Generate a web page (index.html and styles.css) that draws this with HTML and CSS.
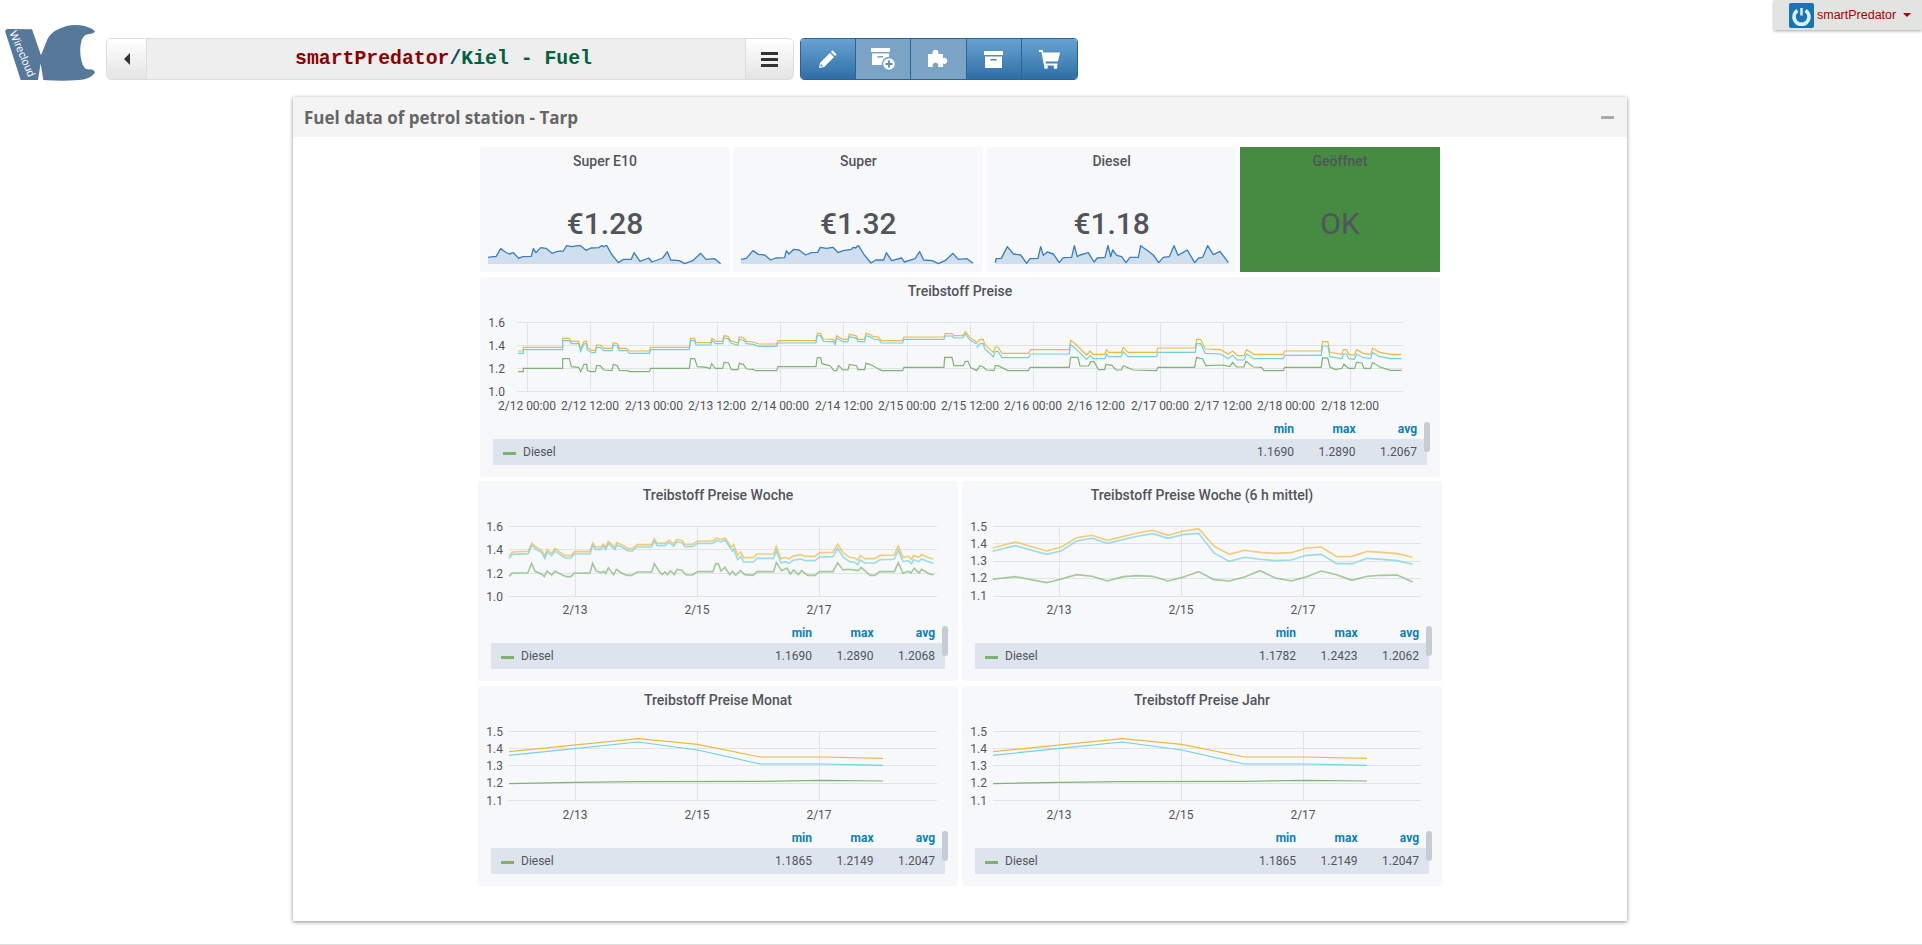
FILE: index.html
```html
<!DOCTYPE html>
<html>
  <head>
    <meta charset="utf-8">
    <meta name="viewport" content="width=device-width, initial-scale=1">
    <title>smartPredator/Kiel - Fuel</title>
    <link rel="stylesheet" href="styles.css">
  </head>
  <body>
    <header class="topbar">
      <svg class="logo" viewBox="0 0 315 195">
        <path fill="#55789b" d="M16 36Q14 28 24 27L96 28L123 106L142 58Q152 38 175 28Q205 12 240 16Q270 20 285 34Q280 42 268 42Q252 42 245 60Q236 90 245 125Q252 150 268 148Q282 148 285 158Q270 178 235 180Q190 184 130 180L122 130L114 180L62 180Z"/>
        <text class="logo-text" transform="translate(28 38) rotate(67)">Wirecloud</text>
      </svg>
      <div class="path-bar">
        <button class="path-btn back"><span class="caret-left"></span></button>
        <div class="path-title"><span class="owner">smartPredator</span><span class="slash">/</span><span class="name">Kiel - Fuel</span></div>
        <button class="path-btn menu"><span></span><span></span><span></span></button>
      </div>
      <div class="tools">
        <button class="tool">
          <svg width="18" height="18" viewBox="0 0 18 18"><path fill="#fff" d="M13.6 0.3L17.7 4.4L16 6.1L11.9 2ZM10.9 3L15 7.1L5.2 16.9L0 18L1.1 12.8ZM2 13.5L1.4 16.6L4.5 16L2.8 15.2Z"/></svg>
        </button>
        <button class="tool off">
          <svg width="26" height="24" viewBox="0 0 26 24">
            <path fill="#fff" fill-rule="evenodd" d="M1 1H20V5H1ZM2 6.500H19V18H2ZM7.500 9V10.500H13V9Z"/>
            <circle cx="19" cy="17" r="6.500" fill="#fff" stroke="#7ba3c5" stroke-width="1.500"/>
            <path fill="none" stroke="#5f8fb8" stroke-width="2" d="M15.500 17H22.500M19 13.500V20.500"/>
          </svg>
        </button>
        <button class="tool off">
          <svg width="21" height="21" viewBox="0 0 21 21"><path fill="#fff" d="M0 5h4.800a3 3 0 1 1 5.400 0H15v4.200a3 3 0 1 1 0 5.400V18H10.200a3 3 0 1 0-5.400 0H0z"/></svg>
        </button>
        <button class="tool">
          <svg width="19" height="17" viewBox="0 0 19 17"><path fill="#fff" fill-rule="evenodd" d="M0 0H19V4H0ZM1 5.500H18V17H1ZM6.500 8V9.500H12.500V8Z"/></svg>
        </button>
        <button class="tool">
          <svg width="21" height="19" viewBox="0 0 21 19"><path fill="#fff" d="M0 0H3.600L4.400 2.500H21L19 11.500H6.400L6.800 13.500H18.500V15.500H5L2.400 2H0Z"/><circle cx="7" cy="17" r="1.900" fill="#fff"/><circle cx="16.500" cy="17" r="1.900" fill="#fff"/></svg>
        </button>
      </div>
      <div class="user">
        <svg width="25" height="25" viewBox="0 0 25 25">
          <rect width="25" height="25" rx="2" fill="#1276b5"/>
          <path fill="none" stroke="#e2edf3" stroke-width="3.500" d="M8.500 7.500A7.500 7.500 0 1 0 16.500 7.500"/>
          <path fill="none" stroke="#e2edf3" stroke-width="2.500" d="M12.500 5V12.500"/>
        </svg>
        <span class="user-name">smartPredator</span>
        <span class="caret-down"></span>
      </div>
    </header>

    <section class="panel">
      <div class="panel-head">
        <h2>Fuel data of petrol station - Tarp</h2>
        <span class="minimize"></span>
      </div>
      <div class="dash">
        <div class="stats">
          <div class="stat">
            <div class="card-title">Super E10</div>
            <div class="stat-value">€1.28</div>
            <svg class="spark" viewBox="0 0 750 81">
              <g transform="translate(-30 -315)">
                <path class="spark-fill" d="M54 352L70 350L78 350L92 326L106 336L118 342L130 338L146 355L158 350L184 349L190 326L198 338L212 323L228 325L246 340L262 334L280 333L290 317L306 320L330 316L348 331L362 324L386 323L394 317L400 320L410 316L424 342L445 368L460 358L484 358L492 338L510 364L536 354L546 366L578 354L592 335L602 360L628 362L644 371L668 362L692 340L708 358L734 356L752 371V372H54Z"/>
                <path class="spark-line" d="M54 352L70 350L78 350L92 326L106 336L118 342L130 338L146 355L158 350L184 349L190 326L198 338L212 323L228 325L246 340L262 334L280 333L290 317L306 320L330 316L348 331L362 324L386 323L394 317L400 320L410 316L424 342L445 368L460 358L484 358L492 338L510 364L536 354L546 366L578 354L592 335L602 360L628 362L644 371L668 362L692 340L708 358L734 356L752 371"/>
              </g>
            </svg>
          </div>
          <div class="stat">
            <div class="card-title">Super</div>
            <div class="stat-value">€1.32</div>
            <svg class="spark" viewBox="0 0 750 81">
              <g transform="translate(-790 -315)">
                <path class="spark-fill" d="M814 358L830 355L850 332L866 343L885 345L903 360L918 354L945 353L950 332L958 342L972 328L988 330L1008 345L1025 338L1044 337L1052 322L1070 325L1090 322L1106 338L1120 332L1145 328L1150 322L1158 324L1166 316L1184 345L1204 369L1218 360L1242 360L1250 338L1266 362L1296 354L1304 366L1336 356L1350 335L1362 360L1388 362L1406 371L1426 362L1450 340L1466 358L1492 356L1510 370V372H814Z"/>
                <path class="spark-line" d="M814 358L830 355L850 332L866 343L885 345L903 360L918 354L945 353L950 332L958 342L972 328L988 330L1008 345L1025 338L1044 337L1052 322L1070 325L1090 322L1106 338L1120 332L1145 328L1150 322L1158 324L1166 316L1184 345L1204 369L1218 360L1242 360L1250 338L1266 362L1296 354L1304 366L1336 356L1350 335L1362 360L1388 362L1406 371L1426 362L1450 340L1466 358L1492 356L1510 370"/>
              </g>
            </svg>
          </div>
          <div class="stat">
            <div class="card-title">Diesel</div>
            <div class="stat-value">€1.18</div>
            <svg class="spark" viewBox="0 0 750 81">
              <g transform="translate(-51 -315)">
                <path class="spark-fill" d="M76 368L78 356L94 355L112 320L130 342L152 345L170 370L180 356L204 355L212 320L220 346L232 336L250 342L268 368L280 353L305 352L313 317L322 350L330 345L355 338L372 366L382 354L405 352L414 316L422 350L428 330L440 346L455 350L468 368L480 352L505 352L512 317L530 330L550 345L566 368L580 352L598 350L612 317L624 346L652 330L674 368L686 354L698 352L713 317L730 344L750 334L775 368V372H76Z"/>
                <path class="spark-line" d="M76 368L78 356L94 355L112 320L130 342L152 345L170 370L180 356L204 355L212 320L220 346L232 336L250 342L268 368L280 353L305 352L313 317L322 350L330 345L355 338L372 366L382 354L405 352L414 316L422 350L428 330L440 346L455 350L468 368L480 352L505 352L512 317L530 330L550 345L566 368L580 352L598 350L612 317L624 346L652 330L674 368L686 354L698 352L713 317L730 344L750 334L775 368"/>
              </g>
            </svg>
          </div>
          <div class="stat stat-ok">
            <div class="card-title">Geöffnet</div>
            <div class="stat-value ok">OK</div>
          </div>
        </div>

        <div class="card card-wide">
          <div class="card-title">Treibstoff Preise</div>
          <svg class="chart" width="960" height="115" viewBox="0 0 960 115">
            <g class="grid">
              <path d="M37 17.500H923M37 40.500H923M37 63.500H923M37 86.500H923"/>
              <path d="M47.500 17V87M110.500 17V87M173.500 17V87M237.500 17V87M300.500 17V87M363.500 17V87M427.500 17V87M490.500 17V87M553.500 17V87M616.500 17V87M680.500 17V87M743.500 17V87M806.500 17V87M870.500 17V87"/>
            </g>
            <g class="y-labels">
              <text x="25" y="22">1.6</text><text x="25" y="45">1.4</text><text x="25" y="68">1.2</text><text x="25" y="91">1.0</text>
            </g>
            <g class="x-labels">
              <text x="47" y="105">2/12 00:00</text><text x="110" y="105">2/12 12:00</text><text x="174" y="105">2/13 00:00</text><text x="237" y="105">2/13 12:00</text><text x="300" y="105">2/14 00:00</text><text x="364" y="105">2/14 12:00</text><text x="427" y="105">2/15 00:00</text><text x="490" y="105">2/15 12:00</text><text x="553" y="105">2/16 00:00</text><text x="616" y="105">2/16 12:00</text><text x="680" y="105">2/17 00:00</text><text x="743" y="105">2/17 12:00</text><text x="806" y="105">2/18 00:00</text><text x="870" y="105">2/18 12:00</text>
            </g>
            <g class="lines" transform="scale(.3333) translate(0 -90)">
              <defs>
                <path id="wide-a" d="M114 228L130 228L130 217L248 217L248 190L268 190L274 199L296 199L302 222L312 199L320 199L322 218L336 226L346 226L350 210L360 210L372 220L396 220L400 203L412 206L418 220L440 220L448 228L508 228L512 217L628 217L632 190L644 190L648 203L692 203L696 190L708 199L728 199L732 182L744 184L752 197L774 204L778 186L790 188L800 199L820 201L836 207L890 207L894 197L1008 197L1012 175L1022 175L1030 192L1060 193L1066 202L1070 182L1080 188L1088 193L1104 193L1108 178L1130 183L1134 193L1154 193L1158 175L1170 178L1180 185L1196 186L1204 197L1268 197L1272 186L1392 186L1396 176L1416 176L1422 182L1448 182L1456 170L1470 188L1490 200"/>
                <path id="wide-b" d="M1490 205L1500 193L1510 193L1514 208L1540 232L1546 216L1554 216L1566 235L1646 235L1652 224L1768 224L1772 196L1784 205L1820 240L1830 228L1840 238L1874 238L1880 224L1886 232L1924 232L1930 217L1944 232L2030 232L2034 219L2146 219L2150 193L2162 193L2176 222L2222 224L2245 238L2258 228L2272 242L2292 242L2300 224L2322 238L2410 238L2414 228L2524 228L2528 200L2544 200L2550 232L2586 238L2590 224L2600 224L2606 238L2624 240L2630 224L2650 235L2672 238L2678 220L2700 232L2732 238L2765 238"/>
              </defs>
              <use href="#wide-a" class="yellow"/>
              <use href="#wide-b" class="yellow"/>
              <use href="#wide-a" class="cyan" transform="translate(0 7)"/>
              <use href="#wide-b" class="cyan" transform="translate(0 13)"/>
              <path class="green" d="M114 290L130 290L130 280L248 280L248 251L268 251L274 275L296 277L302 290L312 268L320 268L322 287L332 290L346 290L350 272L360 272L372 285L396 287L400 268L412 272L418 286L444 287L448 290L508 290L512 280L628 280L632 251L644 251L652 275L680 277L690 281L695 266L706 280L728 280L732 262L746 264L754 284L774 284L778 265L790 268L800 282L820 283L826 287L890 287L894 275L1008 275L1012 248L1022 248L1026 266L1050 272L1062 287L1070 287L1076 272L1088 284L1104 285L1108 268L1130 272L1134 284L1154 284L1158 265L1170 268L1200 284L1206 287L1268 287L1272 277L1392 277L1394 247L1416 247L1422 272L1450 272L1456 259L1464 259L1472 278L1490 287L1500 272L1510 276L1520 285L1542 287L1546 272L1554 272L1584 287L1646 287L1650 277L1768 277L1772 247L1794 247L1800 273L1826 273L1832 260L1842 260L1856 284L1874 284L1878 268L1896 271L1908 285L1924 285L1930 272L1960 285L2030 287L2034 277L2144 277L2150 247L2168 252L2178 272L2230 270L2250 275L2258 262L2270 276L2292 276L2298 259L2320 276L2345 277L2352 287L2410 287L2414 277L2524 277L2528 248L2544 250L2550 276L2566 284L2586 280L2592 268L2606 280L2624 280L2630 262L2646 264L2652 280L2672 280L2678 262L2700 276L2732 286L2765 286"/>
            </g>
          </svg>
          <div class="legend">
            <div class="legend-head"><span>min</span><span>max</span><span>avg</span></div>
            <div class="legend-row">
              <i class="swatch"></i><span class="series">Diesel</span><span>1.1690</span><span>1.2890</span><span>1.2067</span>
            </div>
            <div class="scroll-thumb"></div>
          </div>
        </div>

        <div class="card-row">
          <div class="card">
            <div class="card-title">Treibstoff Preise Woche</div>
            <svg class="chart" width="480" height="115" viewBox="0 0 480 115">
              <g class="grid">
                <path d="M31 17.500H459M31 40.500H459M31 64.500H459M31 87.500H459"/>
                <path d="M97.500 17V88M219.500 17V88M341.500 17V88"/>
              </g>
              <g class="y-labels">
                <text x="25" y="22">1.6</text><text x="25" y="45">1.4</text><text x="25" y="69">1.2</text><text x="25" y="92">1.0</text>
              </g>
              <g class="x-labels">
                <text x="97" y="105">2/13</text><text x="219" y="105">2/15</text><text x="341" y="105">2/17</text>
              </g>
              <g class="lines thick" transform="scale(.3333) translate(-9 -93)">
                <defs>
                  <path id="week-a" d="M102 235L112 222L160 220L170 195L185 208L200 217L210 235L216 215L230 226L240 212L260 226L270 233L288 233L298 221L345 221L353 195L362 207L378 207L385 198L392 208L400 190L420 208L425 194L440 200L460 212L472 212L486 200L530 200L538 182L546 196L560 195L570 196L582 186L596 198L606 184L622 188L630 199L652 199L668 189L714 189L726 180L738 185L750 180L770 208"/>
                  <path id="week-b" d="M770 208L776 200L788 232L798 222L806 239L836 239L846 228L896 228L904 205L918 242L932 238L942 243L954 234L978 230L990 235L1020 235L1034 224L1074 223L1088 198L1104 224L1124 238L1140 240L1148 247L1156 233L1170 242L1200 242L1216 232L1258 231L1270 204L1284 238L1300 235L1310 244L1316 232L1332 238L1340 230L1364 240L1376 243"/>
                </defs>
                <use href="#week-a" class="yellow"/>
                <use href="#week-b" class="yellow"/>
                <use href="#week-a" class="cyan" transform="translate(0 7)"/>
                <use href="#week-b" class="cyan" transform="translate(0 13)"/>
                <path class="green" d="M102 295L112 285L158 285L170 256L180 280L200 288L208 296L216 279L230 291L240 279L262 291L275 296L288 296L298 285L345 285L353 256L364 279L378 284L386 280L392 286L400 270L416 290L424 274L440 285L456 292L470 292L486 282L530 282L538 257L552 280L562 290L570 282L578 290L586 278L598 290L606 274L620 277L634 291L652 291L668 281L714 281L722 257L730 257L738 279L750 268L764 290L772 280L782 292L796 278L810 290L834 292L846 281L896 281L904 253L920 278L936 270L946 288L956 276L970 290L980 278L998 292L1020 292L1034 281L1074 281L1088 254L1104 276L1120 274L1150 278L1158 268L1186 292L1200 292L1214 281L1258 281L1270 254L1284 286L1300 280L1308 285L1318 271L1332 285L1340 274L1364 288L1376 291"/>
              </g>
            </svg>
            <div class="legend">
              <div class="legend-head"><span>min</span><span>max</span><span>avg</span></div>
              <div class="legend-row">
                <i class="swatch"></i><span class="series">Diesel</span><span>1.1690</span><span>1.2890</span><span>1.2068</span>
              </div>
              <div class="scroll-thumb"></div>
            </div>
          </div>

          <div class="card">
            <div class="card-title">Treibstoff Preise Woche (6 h mittel)</div>
            <svg class="chart" width="480" height="115" viewBox="0 0 480 115">
              <g class="grid">
                <path d="M31 17.500H459M31 34.500H459M31 52.500H459M31 69.500H459M31 87.500H459"/>
                <path d="M97.500 17V88M219.500 17V88M341.500 17V88"/>
              </g>
              <g class="y-labels">
                <text x="25" y="22">1.5</text><text x="25" y="39">1.4</text><text x="25" y="56">1.3</text><text x="25" y="73">1.2</text><text x="25" y="91">1.1</text>
              </g>
              <g class="x-labels">
                <text x="97" y="105">2/13</text><text x="219" y="105">2/15</text><text x="341" y="105">2/17</text>
              </g>
              <g class="lines thick" transform="scale(.3333) translate(-6 -93)">
                <path class="yellow" d="M98 210L166 192L260 219L304 207L350 179L396 172L442 187L532 165L578 157L624 172L668 160L716 152L762 204L808 229L854 217L900 223L946 226L994 224L1040 210L1084 207L1130 236L1176 235L1222 220L1266 223L1312 227L1358 238"/>
                <path class="cyan" d="M98 220L166 203L260 229L304 218L350 189L396 181L442 196L532 175L578 167L624 181L668 170L716 166L762 225L808 250L854 238L900 244L946 248L994 246L1040 232L1084 229L1130 257L1176 257L1222 241L1266 244L1312 248L1358 259"/>
                <path class="green" d="M98 304L166 296L260 314L304 303L350 290L396 295L442 309L490 296L532 293L578 295L624 309L668 298L716 281L762 305L808 309L854 297L900 278L946 300L994 309L1040 296L1084 279L1130 290L1176 307L1222 295L1266 292L1312 291L1358 312"/>
              </g>
            </svg>
            <div class="legend">
              <div class="legend-head"><span>min</span><span>max</span><span>avg</span></div>
              <div class="legend-row">
                <i class="swatch"></i><span class="series">Diesel</span><span>1.1782</span><span>1.2423</span><span>1.2062</span>
              </div>
              <div class="scroll-thumb"></div>
            </div>
          </div>
        </div>

        <div class="card-row">
          <div class="card">
            <div class="card-title">Treibstoff Preise Monat</div>
            <svg class="chart" width="480" height="115" viewBox="0 0 480 115">
              <g class="grid">
                <path d="M31 17.500H459M31 34.500H459M31 51.500H459M31 69.500H459M31 86.500H459"/>
                <path d="M97.500 17V87M219.500 17V87M341.500 17V87"/>
              </g>
              <g class="y-labels">
                <text x="25" y="22">1.5</text><text x="25" y="39">1.4</text><text x="25" y="56">1.3</text><text x="25" y="73">1.2</text><text x="25" y="91">1.1</text>
              </g>
              <g class="x-labels">
                <text x="97" y="105">2/13</text><text x="219" y="105">2/15</text><text x="341" y="105">2/17</text>
              </g>
              <g class="lines" transform="scale(.3333) translate(-9 -96)">
                <path class="yellow" d="M102 209L490 170L668 187L856 225L1040 225L1224 229"/>
                <path class="cyan" d="M102 220L490 180L668 204L856 246L1040 246L1224 250"/>
                <path class="green" d="M102 305L300 301L490 299L856 298L1040 295L1224 297"/>
              </g>
            </svg>
            <div class="legend">
              <div class="legend-head"><span>min</span><span>max</span><span>avg</span></div>
              <div class="legend-row">
                <i class="swatch"></i><span class="series">Diesel</span><span>1.1865</span><span>1.2149</span><span>1.2047</span>
              </div>
              <div class="scroll-thumb"></div>
            </div>
          </div>

          <div class="card">
            <div class="card-title">Treibstoff Preise Jahr</div>
            <svg class="chart" width="480" height="115" viewBox="0 0 480 115">
              <g class="grid">
                <path d="M31 17.500H459M31 34.500H459M31 51.500H459M31 69.500H459M31 86.500H459"/>
                <path d="M97.500 17V87M219.500 17V87M341.500 17V87"/>
              </g>
              <g class="y-labels">
                <text x="25" y="22">1.5</text><text x="25" y="39">1.4</text><text x="25" y="56">1.3</text><text x="25" y="73">1.2</text><text x="25" y="91">1.1</text>
              </g>
              <g class="x-labels">
                <text x="97" y="105">2/13</text><text x="219" y="105">2/15</text><text x="341" y="105">2/17</text>
              </g>
              <g class="lines" transform="scale(.3333) translate(-9 -96)">
                <path class="yellow" d="M102 209L490 170L668 187L856 225L1040 225L1224 229"/>
                <path class="cyan" d="M102 220L490 180L668 204L856 246L1040 246L1224 250"/>
                <path class="green" d="M102 305L300 301L490 299L856 298L1040 295L1224 297"/>
              </g>
            </svg>
            <div class="legend">
              <div class="legend-head"><span>min</span><span>max</span><span>avg</span></div>
              <div class="legend-row">
                <i class="swatch"></i><span class="series">Diesel</span><span>1.1865</span><span>1.2149</span><span>1.2047</span>
              </div>
              <div class="scroll-thumb"></div>
            </div>
          </div>
        </div>
      </div>
    </section>
    <div class="page-foot"></div>
  </body>
</html>
```

FILE: styles.css
```css
* {
  box-sizing: border-box;
}

html,
body {
  height: 945px;
  overflow: hidden;
}

body {
  margin: 0;
  background: #fff;
  font-family: Roboto, sans-serif;
  color: #52545c;
  position: relative;
}

button {
  border: 0;
  padding: 0;
  margin: 0;
}

/* top bar */

.topbar {
  display: flex;
  align-items: flex-start;
  height: 97px;
}

.logo {
  width: 105px;
  height: 65px;
  margin-top: 20px;
  flex: none;
}

.logo-text {
  fill: #fff;
  font: 33px "Liberation Sans", sans-serif;
}

.path-bar {
  display: flex;
  width: 688px;
  height: 42px;
  margin-top: 38px;
  margin-left: 1px;
  background: #eee;
  border: 1px solid #ddd;
  border-radius: 5px;
  overflow: hidden;
}

.path-btn {
  width: 40px;
  flex: none;
  background: linear-gradient(#fff, #e4e4e4);
  display: flex;
  flex-direction: column;
  align-items: center;
  justify-content: center;
}

.path-btn.back {
  border-right: 1px solid #ddd;
}

.path-btn.menu {
  width: 48px;
  gap: 3px;
  border-left: 1px solid #ddd;
}

.path-btn.menu span {
  display: block;
  width: 17px;
  height: 3px;
  background: #333;
}

.caret-left {
  width: 0;
  height: 0;
  border-top: 6px solid transparent;
  border-bottom: 6px solid transparent;
  border-right: 6px solid #333;
}

.path-title {
  flex: 1;
  padding-right: 5px;
  text-align: center;
  font: bold 19.800px/40px "Liberation Mono", monospace;
  color: #00613f;
  white-space: pre;
}

.owner {
  color: #8b0000;
}

.slash {
  color: #0f4a63;
}

.tools {
  display: flex;
  margin-top: 38px;
  margin-left: 6px;
  border-radius: 4px;
  overflow: hidden;
  border: 1px solid #2a6496;
  height: 42px;
}

.tool {
  width: 55.200px;
  display: flex;
  align-items: center;
  justify-content: center;
  background: linear-gradient(#68a2d3, #2f6fa5);
  border-right: 1px solid #2a6496;
}

.tool:last-child {
  border-right: 0;
}

.tool.off {
  background: #7ba3c5;
}

.user {
  margin-left: auto;
  width: 148px;
  height: 30px;
  display: flex;
  align-items: center;
  padding-left: 15px;
  background: #e3e4e1;
  box-shadow: 0 1px 3px rgba(0, 0, 0, 0.35);
  font: 12.500px "Liberation Sans", sans-serif;
  color: #a80000;
}

.user-name {
  margin-left: 3px;
}

.caret-down {
  margin-left: 7px;
  width: 0;
  height: 0;
  border-left: 4px solid transparent;
  border-right: 4px solid transparent;
  border-top: 4px solid #a80000;
}

/* workspace panel */

.panel {
  width: 1334px;
  height: 824px;
  margin-left: 293px;
  background: #fff;
  box-shadow: 0 1px 4px rgba(0, 0, 0, 0.45);
}

.panel-head {
  height: 40px;
  padding: 0 13px 0 11px;
  display: flex;
  align-items: center;
  justify-content: space-between;
  background: #f4f4f4;
}

.panel-head h2 {
  margin: 0;
  font: bold 17px "Open Sans", sans-serif;
  color: #666;
}

.minimize {
  width: 13px;
  height: 3px;
  background: #aaa;
}

.dash {
  width: 964px;
  margin: 10px auto 0;
}

.stats {
  display: grid;
  grid-template-columns: 250px 250px 250px 200px;
  column-gap: 3.330px;
  margin: 0 2px 5px;
}

.stat {
  height: 125px;
  display: flex;
  flex-direction: column;
  align-items: center;
  background: #f7f8fa;
  border-radius: 3px;
}

.stat-ok {
  background: #458b41;
  border-radius: 0;
}

.card-title {
  height: 28px;
  width: 100%;
  font-size: 14px;
  font-weight: 500;
  line-height: 28px;
  text-align: center;
  color: #52545c;
}

.stat-value {
  margin-top: 29px;
  font-size: 30px;
  font-weight: 500;
  line-height: 40px;
}

.stat-value.ok {
  font-weight: 400;
}

.spark {
  display: block;
  width: 250px;
  height: 27px;
  margin-top: 1px;
  flex: none;
}

.spark-fill {
  fill: #cfdfee;
}

.spark-line {
  fill: none;
  stroke: #3a7fbb;
  stroke-width: 4px;
  stroke-linejoin: round;
}

.card {
  position: relative;
  width: 480px;
  height: 200px;
  background: #f7f8fa;
  border-radius: 3px;
}

.card-wide {
  width: 960px;
  margin: 0 2px 4px;
}

.card-row {
  display: flex;
  justify-content: space-between;
  margin-bottom: 5px;
}

.chart {
  display: block;
}

.grid path {
  fill: none;
  stroke: #e1e3e6;
  stroke-width: 1;
}

.y-labels text,
.x-labels text {
  font-size: 12px;
  fill: #52545c;
}

.y-labels text {
  text-anchor: end;
}

.x-labels text {
  text-anchor: middle;
}

.lines path {
  fill: none;
  stroke-width: 1.200px;
  vector-effect: non-scaling-stroke;
}

.lines.thick path {
  stroke-width: 1.600px;
  stroke-opacity: 0.7;
}

.yellow {
  stroke: #efb93f;
}

.cyan {
  stroke: #70d0e2;
}

.green {
  stroke: #7fb572;
}

/* legend */

.legend {
  position: relative;
  margin: 0 13px;
  font-size: 12px;
}

.legend-head {
  display: flex;
  justify-content: flex-end;
  height: 19px;
  padding-right: 10px;
  font-weight: 700;
  line-height: 19px;
  color: #0a80b9;
}

.legend-head span,
.legend-row span {
  width: 61.500px;
  text-align: right;
}

.legend-row {
  display: flex;
  align-items: center;
  height: 26px;
  padding: 0 10px;
  background: #dde4ed;
}

.legend-row .series {
  flex: 1;
  margin-left: 7px;
  text-align: left;
}

.swatch {
  width: 13px;
  height: 3px;
  margin-top: 3px;
  background: #7eb26d;
}

.scroll-thumb {
  position: absolute;
  top: 2px;
  right: -3px;
  width: 6px;
  height: 30px;
  border-radius: 3px;
  background: #c5ccd5;
}

.page-foot {
  position: absolute;
  left: 0;
  right: 0;
  bottom: 0;
  height: 1px;
  background: #ddd;
}
```
